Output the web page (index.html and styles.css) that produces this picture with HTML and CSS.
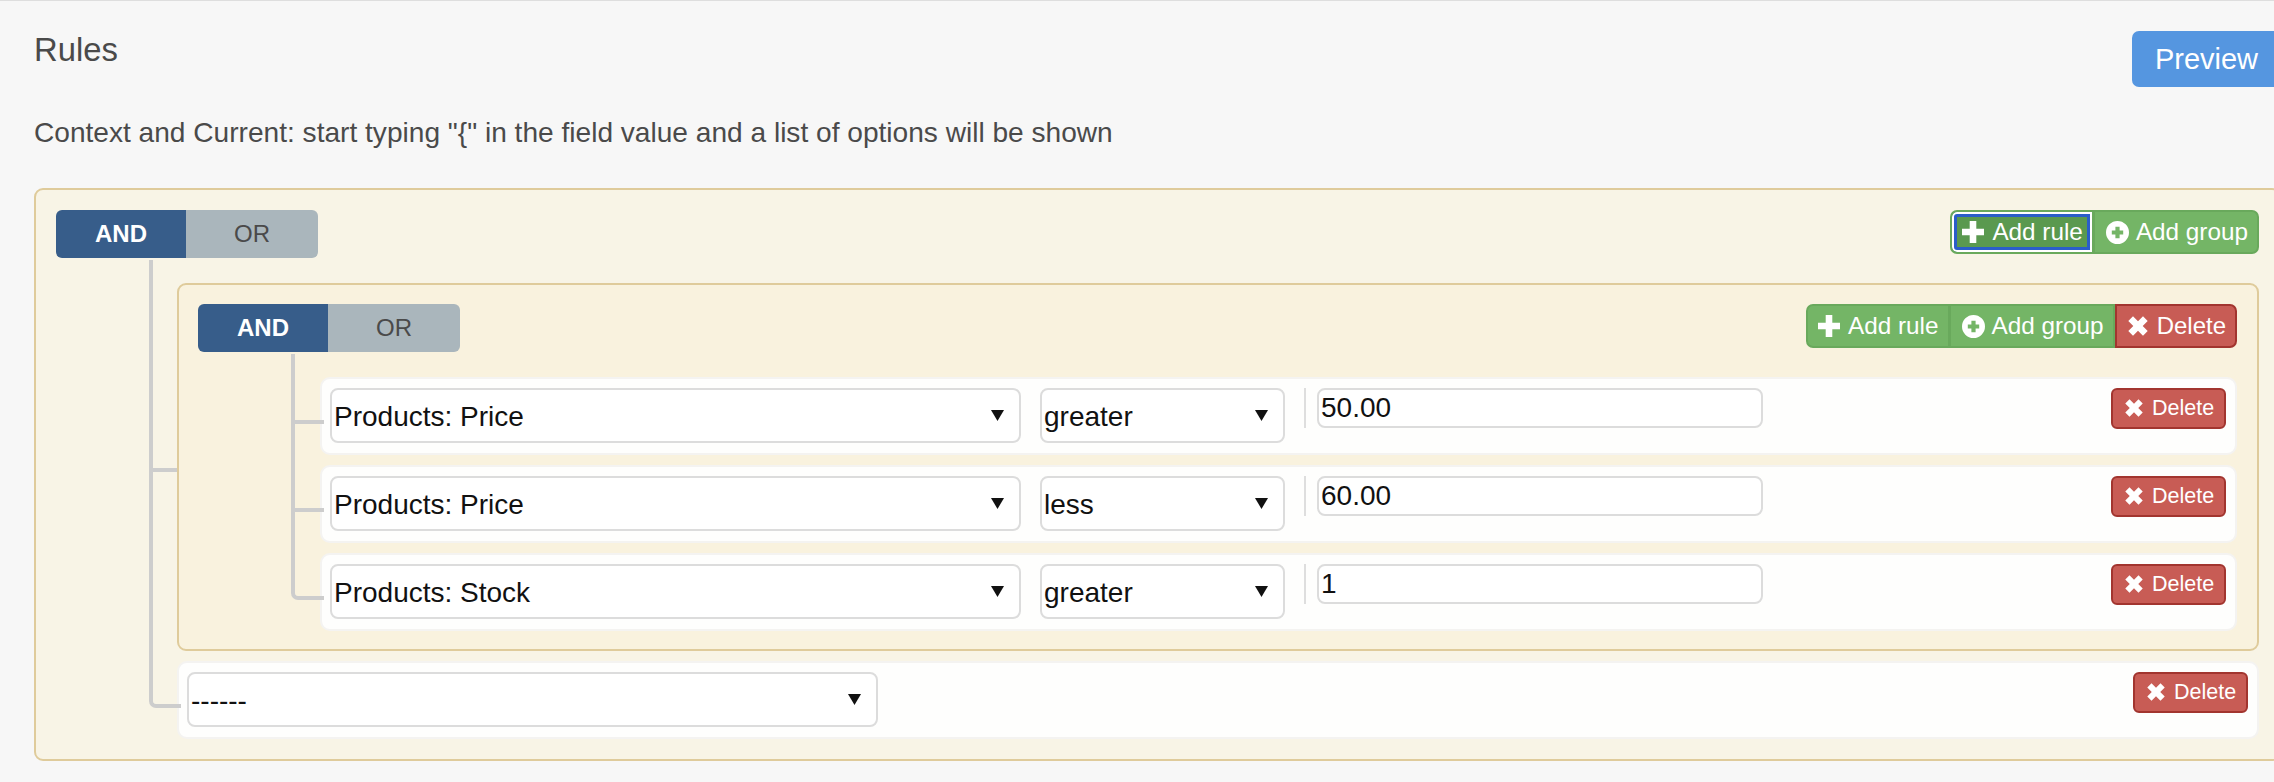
FILE: index.html
```html
<!DOCTYPE html>
<html lang="en">
<head>
<meta charset="utf-8">
<title>Rules</title>
<link rel="stylesheet" href="styles.css">
</head>
<body>
<svg class="defs" aria-hidden="true">
  <symbol id="i-plus" viewBox="0 0 22 22"><path d="M7.7 0h6.6v7.7H22v6.6h-7.7V22H7.7v-7.7H0V7.7h7.7z"/></symbol>
  <symbol id="i-plus-sign" viewBox="0 0 23 23"><path fill-rule="evenodd" d="M11.5 0a11.5 11.5 0 1 1 0 23a11.5 11.5 0 1 1 0-23zM9.4 5.8v3.6H5.8v4.2h3.6v3.6h4.2v-3.6h3.6V9.4h-3.6V5.8z"/></symbol>
  <symbol id="i-x" viewBox="0 0 20 20"><path d="M5 .3L10 5.3 15 .3 19.7 5 14.7 10 19.7 15 15 19.7 10 14.7 5 19.7 .3 15 5.3 10 .3 5z"/></symbol>
</svg>
<main class="page">
  <header class="head">
    <h1 class="title">Rules</h1>
    <button class="preview" type="button">Preview</button>
  </header>
  <p class="hint">Context and Current: start typing "{" in the field value and a list of options will be shown</p>

  <section class="group outer">
    <div class="group-head">
      <div class="toggle"><span class="tog on">AND</span><span class="tog">OR</span></div>
      <div class="btns">
        <button class="btn green focused" type="button"><svg class="ic plus"><use href="#i-plus"/></svg>Add rule</button>
        <button class="btn green add-group" type="button"><svg class="ic sign"><use href="#i-plus-sign"/></svg>Add group</button>
      </div>
    </div>
    <div class="list outer-list">
      <div class="item">
        <section class="group inner">
          <div class="group-head">
            <div class="toggle"><span class="tog on">AND</span><span class="tog">OR</span></div>
            <div class="btns">
              <button class="btn green" type="button"><svg class="ic plus"><use href="#i-plus"/></svg>Add rule</button>
              <button class="btn green add-group" type="button"><svg class="ic sign"><use href="#i-plus-sign"/></svg>Add group</button>
              <button class="btn red" type="button"><svg class="ic x"><use href="#i-x"/></svg>Delete</button>
            </div>
          </div>
          <div class="list inner-list">
            <div class="item rule">
              <div class="sel field"><select><option>Products: Price</option></select></div>
              <div class="sel op"><select><option>greater</option></select></div>
              <div class="value"><input type="text" value="50.00"></div>
              <button class="del" type="button"><svg class="ic xs"><use href="#i-x"/></svg>Delete</button>
            </div>
            <div class="item rule">
              <div class="sel field"><select><option>Products: Price</option></select></div>
              <div class="sel op"><select><option>less</option></select></div>
              <div class="value"><input type="text" value="60.00"></div>
              <button class="del" type="button"><svg class="ic xs"><use href="#i-x"/></svg>Delete</button>
            </div>
            <div class="item rule">
              <div class="sel field"><select><option>Products: Stock</option></select></div>
              <div class="sel op"><select><option>greater</option></select></div>
              <div class="value"><input type="text" value="1"></div>
              <button class="del" type="button"><svg class="ic xs"><use href="#i-x"/></svg>Delete</button>
            </div>
          </div>
        </section>
      </div>
      <div class="item rule">
        <div class="sel field"><select><option>------</option></select></div>
        <button class="del" type="button"><svg class="ic xs"><use href="#i-x"/></svg>Delete</button>
      </div>
    </div>
  </section>
</main>
</body>
</html>
```

FILE: styles.css
```css
* { box-sizing: border-box; }
html, body { margin: 0; height: 100%; }
body {
  overflow: hidden;
  background: #f7f7f7;
  border-top: 1px solid #dedede;
  font-family: "Liberation Sans", Arial, sans-serif;
  color: #4a4a4a;
}
.defs { position: absolute; width: 0; height: 0; }
.page { width: 2281px; padding: 30px 0 0 34px; }
.head { display: flex; justify-content: space-between; align-items: flex-start; }
.title { margin: 0; padding-top: 1px; font-size: 32.8px; line-height: 36px; font-weight: 400; }
.preview {
  width: 149px; height: 56px;
  border: 0; border-radius: 7px;
  background: #5596e0; color: #fff;
  font: 400 29px "Liberation Sans", Arial, sans-serif;
}
.hint { margin: 26px 0 35px; font-size: 28.1px; line-height: 40px; }

.group { border: 2px solid #dfcb9b; border-radius: 9px; }
.outer { background: #f8f4e6; padding: 20px; }
.inner { position: relative; z-index: 1; background: #f9f2de; padding: 19px 20px 18px 19px; }
.group-head { display: flex; justify-content: space-between; align-items: flex-start; height: 48px; }

.toggle { display: flex; height: 48px; border-radius: 6px; overflow: hidden; }
.tog {
  width: 132px; display: flex; align-items: center; justify-content: center;
  background: #aab6bc; color: #4a4a4a; font-size: 24px;
}
.tog.on { width: 130px; background: #375d8a; color: #fff; font-weight: 700; }

.btns { display: flex; }
.btn {
  display: flex; align-items: center; height: 44px; padding: 0 9px 0 10px;
  border: 2px solid #69a95c; color: #fff;
  font: 400 24.3px "Liberation Sans", Arial, sans-serif;
}
.add-group { margin-left: -1px; padding: 0 9px 0 11px; }
.btn:first-child { border-radius: 7px 0 0 7px; }
.btn:last-child { border-radius: 0 7px 7px 0; }
.green { background: #74b566; }
.red { background: #c85c55; border-color: #a2352f; padding: 0 9px 0 11px; font-size: 24px; }
.focused {
  background: #5a994f;
  box-shadow: inset 0 0 0 2px #fff, inset 0 0 0 5px #2a5ec9;
}
.ic { fill: currentColor; flex: none; }
.plus { width: 22px; height: 22px; margin-right: 8px; }
.sign { width: 23px; height: 23px; margin-right: 7px; }
.x { width: 20px; height: 20px; margin-right: 9px; }
.xs { width: 18px; height: 18px; margin: 0 9px 2px 0; }

.list { display: flex; flex-direction: column; gap: 10px; margin-top: 25px; }
.outer-list { --stem: 28px; margin-left: 121px; }
.inner-list { --stem: 29px; margin-left: 122px; }
.item { position: relative; }
.item::before {
  content: ""; position: absolute; top: -10px; left: calc(var(--stem) * -1);
  width: var(--stem); height: 53px;
  border-left: 4px solid #cdcdcd; border-bottom: 4px solid #cdcdcd;
}
.item:not(:last-child)::after {
  content: ""; position: absolute; top: 43px; bottom: 0; left: calc(var(--stem) * -1);
  border-left: 4px solid #cdcdcd;
}
.item:first-child::before { top: -23px; height: 66px; }
.item:last-child::before { border-bottom-left-radius: 7px; }
.outer-list > .item:first-child::before { height: 208px; }
.outer-list > .item:first-child::after { top: 185px; }

.rule {
  display: flex; align-items: flex-start; height: 78px;
  padding: 9px 9px 10px 8px;
  background: #fefefd; border: 2px solid #f4f3f1; border-radius: 10px;
}
/* a rule's border moves the origin of its connector pieces by 2px */
.rule::before { margin: -2px 0 0 -2px; }
.rule:not(:last-child)::after { margin: -2px 0 -2px -2px; }

.sel { position: relative; height: 55px; }
.sel::after {
  content: ""; position: absolute; right: 17px; top: 22px;
  width: 13px; height: 11px;
  background: #111; clip-path: polygon(0 0, 100% 0, 50% 100%);
  pointer-events: none;
}
.sel select {
  appearance: none; display: block; width: 100%; height: 100%;
  padding: 2px 20px 0 2px;
  background: #fff; color: #111;
  border: 2px solid #dcdcdc; border-radius: 8px;
  font: 400 28px "Liberation Sans", Arial, sans-serif;
}
.field { width: 691px; }
.op { width: 245px; margin-left: 19px; }
.value { height: 40px; margin-left: 19px; padding-left: 11px; border-left: 2px solid #dedede; }
.value input {
  display: block; width: 446px; height: 40px; padding: 0 3px 0 2px;
  background: #fff; color: #111;
  border: 2px solid #dcdcdc; border-radius: 8px;
  font: 400 28px "Liberation Sans", Arial, sans-serif;
}
.del {
  display: flex; align-items: center; height: 41px; width: 115px; margin-left: auto; padding: 0 0 0 12px;
  background: #c85c55; color: #fff;
  border: 2px solid #a2352f; border-radius: 6px;
  font: 400 21.5px "Liberation Sans", Arial, sans-serif;
}
```
